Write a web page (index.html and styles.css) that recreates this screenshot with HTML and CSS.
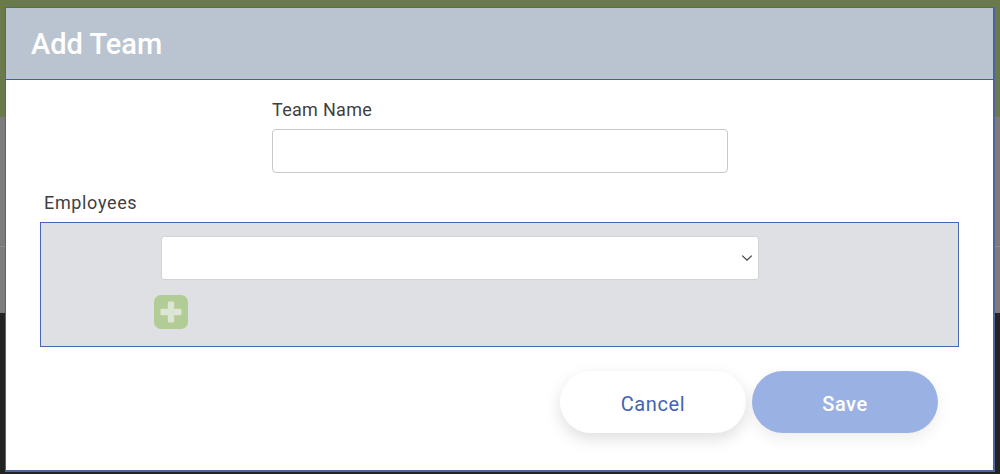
FILE: index.html
```html
<!DOCTYPE html>
<html lang="en">
<head>
<meta charset="utf-8">
<title>Add Team</title>
<link rel="stylesheet" href="styles.css">
</head>
<body>
<div class="modal">
  <header class="modal-head"><h1 class="modal-title">Add Team</h1></header>
  <div class="modal-body">
    <div class="name-field">
      <label class="label" for="team">Team Name</label>
      <input class="text-input" id="team" type="text">
    </div>
    <div class="label employees-label">Employees</div>
    <section class="panel">
      <div class="select">
        <svg class="chevron" width="12" height="8" viewBox="0 0 12 8" aria-hidden="true"><path d="M1.2 1.6 6 6.2l4.8-4.6" fill="none" stroke="#444" stroke-width="1.3"/></svg>
      </div>
      <button class="add" type="button" aria-label="Add employee">
        <svg width="24" height="24" viewBox="0 0 24 24" aria-hidden="true"><path d="M10 1.5h4a1.2 1.2 0 0 1 1.2 1.2v6.1h6.1a1.2 1.2 0 0 1 1.2 1.2v4a1.2 1.2 0 0 1-1.2 1.2h-6.1v6.1a1.2 1.2 0 0 1-1.2 1.2h-4a1.2 1.2 0 0 1-1.2-1.2v-6.1H2.7a1.2 1.2 0 0 1-1.2-1.2v-4a1.2 1.2 0 0 1 1.2-1.2h6.1V2.7A1.2 1.2 0 0 1 10 1.5z" fill="#dfe5d6"/></svg>
      </button>
    </section>
    <div class="actions">
      <button class="btn btn-cancel" type="button">Cancel</button>
      <button class="btn btn-save" type="button">Save</button>
    </div>
  </div>
</div>
</body>
</html>
```

FILE: styles.css
```css
* { box-sizing: border-box; }
html, body { height: 100%; }
body {
  margin: 0;
  padding: 7px 5px 2px 5px;
  font-family: Roboto, "Liberation Sans", sans-serif;
  overflow: hidden;
  background: linear-gradient(to bottom,
    #6b7a4b 0, #6b7a4b 117px,
    #7c7c7c 117px, #7c7c7c 246px,
    #8e8e8e 246px, #8e8e8e 247px,
    #7c7c7c 247px, #7c7c7c 313px,
    #212325 313px, #212325 100%);
}
.modal {
  width: 990px;
  height: 465px;
  background: #fff;
  border: 1px solid #4a66a0;
  border-width: 1px 2px 2px 1px;
  display: flex;
  flex-direction: column;
}
.modal-head {
  height: 72px;
  flex: none;
  background: #b9c4d0;
  border-bottom: 1px solid #3f60a8;
  padding-left: 25px;
  display: flex;
  align-items: center;
}
.modal-title {
  margin: 0;
  color: #fff;
  font-size: 29px;
  font-weight: 500;
  line-height: 1;
  position: relative;
  top: 1px;
}
.modal-body {
  flex: 1;
  display: flex;
  flex-direction: column;
  padding: 19px 35px 0 34px;
}
.name-field {
  width: 456px;
  margin-left: 232px;
  display: flex;
  flex-direction: column;
  gap: 8px;
}
.label {
  display: block;
  font-size: 18px;
  line-height: 22px;
  color: #3f3f3f;
  letter-spacing: .3px;
}
.text-input {
  height: 44px;
  width: 100%;
  background: #fff;
  border: 1px solid #c8c9ce;
  border-radius: 4px;
  outline: none;
}
.employees-label {
  margin: 19px 0 8px 4px;
  letter-spacing: .65px;
}
.panel {
  height: 125px;
  width: 919px;
  background: #dfe0e4;
  border: 1px solid #4767b4;
  padding: 13px 0 0 113px;
  display: flex;
  flex-direction: column;
  align-items: flex-start;
}
.select {
  width: 598px;
  height: 44px;
  margin-left: 7px;
  background: #fff;
  border: 1px solid #d2d3d8;
  border-radius: 3px;
  padding-right: 5px;
  display: flex;
  align-items: center;
  justify-content: flex-end;
}
.add {
  width: 34px;
  height: 34px;
  margin-top: 15px;
  padding: 0;
  border: 0;
  border-radius: 7px;
  background: #b2cc95;
  display: flex;
  align-items: center;
  justify-content: center;
}
.actions {
  display: flex;
  justify-content: flex-end;
  gap: 6px;
  margin-top: 24px;
  padding-right: 20px;
}
.btn {
  width: 186px;
  height: 62px;
  border: 0;
  border-radius: 31px;
  padding: 4px 0 0;
  font-family: inherit;
  font-size: 20px;
  font-weight: 400;
  letter-spacing: .6px;
  box-shadow: 0 6px 16px rgba(0, 0, 0, .13);
}
.btn-cancel { background: #fff; color: #4463b4; }
.btn-save { background: #9ab1e3; color: #fff; font-weight: 500; box-shadow: 0 6px 16px rgba(0, 0, 0, .07); }
```
